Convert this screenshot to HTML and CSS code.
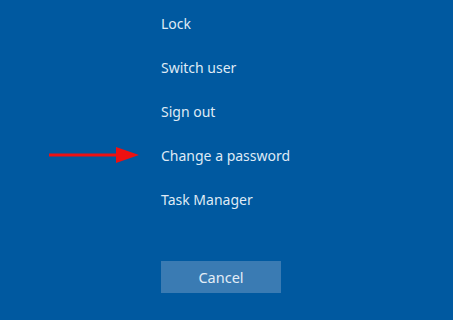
FILE: index.html
```html
<!DOCTYPE html>
<html lang="en">
<head>
    <meta charset="UTF-8">
    <title>Security options</title>
    <link rel="stylesheet" href="styles.css">
</head>
<body>
    <div class="options">
        <ul class="menu">
            <li class="item">Lock</li>
            <li class="item">Switch user</li>
            <li class="item">Sign out</li>
            <li class="item">
                <svg class="arrow" width="92" height="18" viewBox="0 0 92 18">
                    <rect x="0" y="7.5" width="70" height="3" fill="#ee1111"/>
                    <polygon points="67,1 90,9 67,17" fill="#ee1111"/>
                </svg>
                Change a password
            </li>
            <li class="item">Task Manager</li>
        </ul>
        <button class="cancel" type="button">Cancel</button>
    </div>
</body>
</html>
```

FILE: styles.css
```css
html, body {
    margin: 0;
    height: 100%;
}
body {
    background: #0059a0;
    color: #dfeaf5;
    font-family: "Noto Sans", "Open Sans", sans-serif;
    font-size: 14px;
}
.options {
    padding-left: 161px;
}
.menu {
    list-style: none;
    margin: 0;
    padding: 0;
}
.item {
    position: relative;
    height: 44px;
    line-height: 47px;
}
.arrow {
    position: absolute;
    left: -112px;
    top: 14px;
}
.cancel {
    display: block;
    margin-top: 41px;
    width: 120px;
    height: 32px;
    border: none;
    background: #3a7bb3;
    color: #e3edf7;
    font-family: inherit;
    font-size: 14.5px;
    padding: 0;
}
```
